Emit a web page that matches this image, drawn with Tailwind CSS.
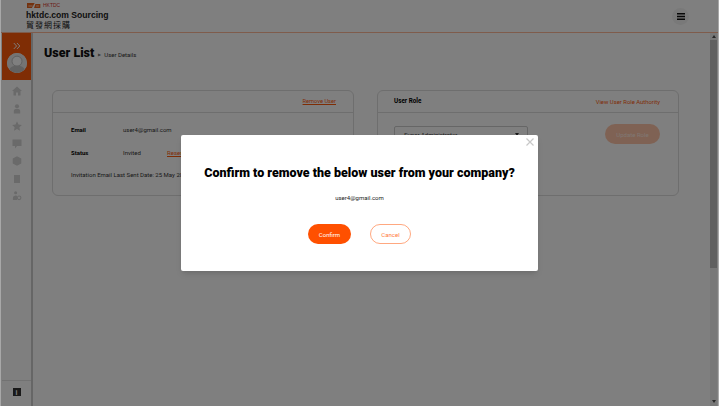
<!DOCTYPE html>
<html lang="en">
  <head>
    <meta charset="UTF-8" />
    <title>User List</title>
    <script src="https://cdn.jsdelivr.net/npm/@tailwindcss/browser@4"></script>
  </head>
  <body class="relative h-[406px] w-[719px] overflow-hidden bg-[#a8a8a8] font-['Roboto',sans-serif] text-black">

    <!-- Page behind the dialog -->
    <div class="mx-[1px] flex h-full flex-col bg-white">
      <header class="flex h-[33px] shrink-0 items-center justify-between border-b border-[#ff5000]/40 pl-[25px] pr-[29px]">
        <div class="flex flex-col">
          <div class="flex h-[7px] items-center gap-[2px] pl-[1px]">
            <svg width="14" height="5" viewBox="0 0 20 5" preserveAspectRatio="none"><path d="M0 0h11L7 5H0z" fill="#e8641e"/><path d="M12 1h7v4h-9z" fill="#e8641e"/><path d="M2 3h6M13 3h4" stroke="#fff" stroke-width=".8"/></svg>
            <span class="font-['Liberation_Sans',sans-serif] text-[5px] leading-none text-[#d8352a]">HKTDC</span>
          </div>
          <span class="mt-[1px] font-['Liberation_Sans',sans-serif] text-[8.600px] leading-[10px] font-bold text-[#222]">hktdc.com Sourcing</span>
          <span class="font-['Noto_Sans_CJK_TC',sans-serif] text-[8px] leading-[10px] tracking-[1px] text-[#222]">貿發網採購</span>
        </div>
        <button class="flex h-[17px] w-[17px] items-center justify-center rounded-full bg-black/5">
          <svg width="8" height="7" viewBox="0 0 8 7"><path d="M0 .8h8M0 3.500h8M0 6.200h8" stroke="#111" stroke-width="1.400"/></svg>
        </button>
      </header>

      <div class="flex min-h-0 flex-1">
        <!-- Sidebar -->
        <aside class="flex w-[32px] shrink-0 flex-col border-r-2 border-[#ccc] pl-[1px] pb-[3px]">
          <div class="flex h-[47px] flex-col items-center bg-[#ff5a0a] pt-[9px]">
            <svg width="8" height="8" viewBox="0 0 10 9" fill="none" stroke="#fff" stroke-width="1.200"><path d="M1 .8l3.500 3.700L1 8.200M5 .8l3.500 3.700L5 8.200"/></svg>
            <div class="mt-[3px] h-[20px] w-[20px] overflow-hidden rounded-full bg-white">
              <svg width="20" height="20" viewBox="0 0 22 22"><rect width="22" height="22" fill="#e8e8e8"/><circle cx="11" cy="9" r="5.500" fill="#fff" stroke="#bbb"/><path d="M1 22c1-6 5-8 10-8s9 2 10 8z" fill="#c4c4c4"/></svg>
            </div>
          </div>
          <nav class="mt-[6px] flex flex-col items-center gap-[7.500px]">
            <svg width="10" height="10" viewBox="0 0 10 10" fill="#d4d4d4"><path d="M5 .5L0 5h1.500v4.500h2.500V6.500h2v3h2.500V5H10z"/></svg>
            <svg width="10" height="10" viewBox="0 0 10 11" fill="#d4d4d4"><circle cx="5" cy="2.500" r="2.300"/><path d="M1.500 10.500V7.500C1.500 6 3 5.200 5 5.200S8.500 6 8.500 7.500v3z"/></svg>
            <svg width="10" height="10" viewBox="0 0 10 10" fill="#d4d4d4"><path d="M5 .3l1.500 3.100 3.400.5-2.500 2.400.6 3.400L5 8.100 2 9.700l.6-3.400L.1 3.900l3.400-.5z"/></svg>
            <svg width="10" height="10" viewBox="0 0 10 10" fill="#d4d4d4"><path d="M.5 .5h9v6.500H5L3 9.500V7H.5z"/></svg>
            <svg width="10" height="10" viewBox="0 0 10 10" fill="#d4d4d4"><path d="M5 .2l4.300 2.400v4.800L5 9.800.7 7.400V2.600z"/></svg>
            <svg width="10" height="10" viewBox="0 0 10 10" fill="#d4d4d4"><path d="M2 1h6v8H2z"/></svg>
            <svg width="10" height="10" viewBox="0 0 10 11"><circle cx="3.500" cy="2" r="1.700" fill="#d4d4d4"/><path d="M.5 10V7.500C.5 6 2 5 3.500 5c.8 0 1.500.3 1.500.3V10z" fill="#d4d4d4"/><circle cx="7.300" cy="7.500" r="2" fill="none" stroke="#d4d4d4" stroke-width="1.200"/></svg>
          </nav>
          <div class="mt-auto flex h-[23px] items-center justify-center border-t border-[#e4e4e4]">
            <span class="flex h-[8px] w-[8px] items-center justify-center bg-[#333] font-['Liberation_Sans',sans-serif] text-[7px] leading-none font-bold text-white">i</span>
          </div>
        </aside>

        <!-- Main content -->
        <main class="min-w-0 flex-1 pt-[10px] pl-[11px]">
          <div class="flex h-[20px] items-center">
            <h1 class="text-[12.500px] leading-[20px] font-black text-[#111]">User List</h1>
            <span class="ml-[4px] mt-[3px] text-[4px] text-[#777]">&#9654;</span>
            <span class="ml-[3px] mt-[3px] text-[6px] text-[#333]">User Details</span>
          </div>
          <div class="mt-[27px] flex gap-[23px] pl-[8px]">
            <section class="h-[106px] w-[302px] rounded-[6px] border border-[#dcdcdc]">
              <div class="flex h-[22px] items-center justify-end border-b border-[#dcdcdc] pr-[17px] pb-[1px]">
                <span class="text-[5.700px] text-[#ff5a0a] underline">Remove User</span>
              </div>
              <div class="pt-[11px] pl-[18px] text-[6px] text-[#333]">
                <div class="flex h-[10px] items-center"><b class="w-[52px] font-bold text-black">Email</b>user4@gmail.com</div>
                <div class="mt-[13px] flex h-[10px] items-center"><b class="w-[52px] font-bold text-black">Status</b><span class="w-[44px]">Invited</span><span class="text-[#ff5a0a] underline">Resend Invitation</span></div>
                <p class="mt-[13px]">Invitation Email Last Sent Date: 25 May 2021</p>
              </div>
            </section>
            <section class="h-[106px] w-[302px] rounded-[6px] border border-[#dcdcdc]">
              <div class="flex h-[22px] items-center justify-between border-b border-[#dcdcdc] pt-[1px] pr-[18px] pl-[16px]">
                <b class="text-[6.300px] font-bold text-black">User Role</b>
                <span class="text-[5.900px] text-[#ff5a0a]">View User Role Authority</span>
              </div>
              <div class="flex items-start justify-between pt-[11px] pr-[18px] pl-[16px]">
                <div class="mt-[2px] flex h-[20px] w-[134px] items-center justify-between rounded-[2px] border border-[#ccc] pr-[8px] pb-[4px] pl-[9px] text-[6px] text-[#333]">Super Administrator<span class="h-0 w-0 border-x-[2.500px] border-t-[3px] border-x-transparent border-t-[#333]"></span></div>
                <button class="h-[20px] w-[55px] rounded-full bg-[#ff5a0a]/35 text-[6px] text-white/70">Update Role</button>
              </div>
            </section>
          </div>
        </main>

        <!-- Scrollbar -->
        <div class="mr-[1px] flex w-[7px] shrink-0 flex-col items-center bg-[#f1f1f1]">
          <span class="mt-[2px] h-0 w-0 border-x-[2.500px] border-b-[3px] border-x-transparent border-b-[#505050]"></span>
          <div class="mt-[2px] h-[228px] w-full bg-[#c1c1c1]"></div>
          <span class="mt-auto mb-[3px] h-0 w-0 border-x-[2.500px] border-t-[3px] border-x-transparent border-t-[#505050]"></span>
        </div>
      </div>
    </div>

    <!-- Dialog overlay -->
    <div class="absolute inset-y-0 right-[1px] left-[1px] flex items-start justify-center bg-black/50 pt-[135px]">
      <div class="relative flex h-[136px] w-[357px] flex-col items-center rounded-[2px] bg-white pt-[29px] shadow-md">
        <svg class="absolute top-[3px] right-[4px]" width="8" height="8" viewBox="0 0 8 8" fill="none" stroke="#c8c8c8" stroke-width="1.200"><path d="M.5 .5l7 7M7.500 .5l-7 7"/></svg>
        <h2 class="text-[12.500px] leading-[17px] font-black whitespace-nowrap text-black">Confirm to remove the below user from your company?</h2>
        <p class="mt-[12px] text-[6px] leading-[10px] text-[#222]">user4@gmail.com</p>
        <div class="mt-[21px] flex gap-[19px]">
          <button class="h-[20px] w-[43px] rounded-full bg-[#ff5000] text-[6px] text-white">Confirm</button>
          <button class="h-[20px] w-[41px] rounded-full border border-[#ff5000]/50 text-[6px] text-[#ff7a40]">Cancel</button>
        </div>
      </div>
    </div>
  </body>
</html>
